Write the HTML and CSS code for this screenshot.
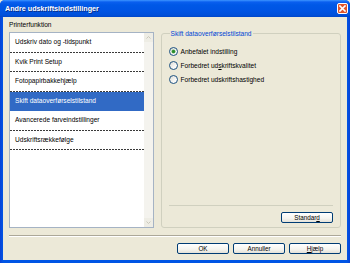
FILE: index.html
```html
<!DOCTYPE html>
<html>
<head>
<meta charset="utf-8">
<link rel="stylesheet" href="styles.css">
</head>
<body>
<div class="window">
  <div class="titlebar">
    <span class="title">Andre udskriftsindstillinger</span>
    <span class="close"><svg width="7" height="7" viewBox="0 0 7 7"><path d="M1 1 L6 6 M6 1 L1 6" stroke="#fff" stroke-width="1.6" stroke-linecap="square"/></svg></span>
  </div>
  <div class="client">
    <div class="main">
      <div class="left">
        <div class="caption">Printerfunktion</div>
        <div class="listbox">
          <ul class="items">
            <li>Udskriv dato og -tidspunkt</li>
            <li>Kvik Print Setup</li>
            <li>Fotopapirbakkehjælp</li>
            <li class="sel">Skift dataoverførselstilstand</li>
            <li>Avancerede farveindstillinger</li>
            <li>Udskriftsrækkefølge</li>
          </ul>
          <div class="scrollbar">
            <span class="sbtn"><svg width="5" height="3" viewBox="0 0 5 3"><path d="M0.5 2.5 L2.5 0.5 L4.5 2.5" fill="none" stroke="#C9C7BA" stroke-width="1"/></svg></span>
            <span class="sbtn"><svg width="5" height="3" viewBox="0 0 5 3"><path d="M0.5 0.5 L2.5 2.5 L4.5 0.5" fill="none" stroke="#C9C7BA" stroke-width="1"/></svg></span>
          </div>
        </div>
      </div>
      <fieldset class="group">
        <legend>Skift dataoverførselstilstand</legend>
        <div class="radios">
          <div class="radio"><span class="dot on"></span><span>Anbefalet indstilling</span></div>
          <div class="radio"><span class="dot"></span><span>Forbedret ud<u>s</u>kriftskvalitet</span></div>
          <div class="radio"><span class="dot"></span><span>Forbedret udskriftshastighed</span></div>
        </div>
        <div class="grow"></div>
        <div class="sep-in"></div>
        <div class="row-end">
          <span class="btn"><span>Standar<u>d</u></span></span>
        </div>
      </fieldset>
    </div>
    <div class="sep"></div>
    <div class="row-end buttons">
      <span class="btn"><span>OK</span></span>
      <span class="btn"><span>Annuller</span></span>
      <span class="btn"><span><u>H</u>jælp</span></span>
    </div>
  </div>
</div>
</body>
</html>
```

FILE: styles.css
```css
html, body {
  margin: 0;
  padding: 0;
  width: 350px;
  height: 263px;
  overflow: hidden;
  background: #ECE9D8;
}
body {
  font-family: "Liberation Sans", Arial, sans-serif;
  font-size: 6.6px;
  color: #000;
}
.window {
  width: 350px;
  height: 263px;
  display: flex;
  flex-direction: column;
  background: linear-gradient(to right, #0842D6 0, #0055E5 3px, #0055E5 347px, #0842D6 350px);
  border-radius: 5px 5px 0 0;
  box-sizing: border-box;
}
.titlebar {
  height: 17px;
  flex: none;
  display: flex;
  align-items: center;
  justify-content: space-between;
  padding: 0 2px 0 5px;
  background: linear-gradient(to bottom, #3D95FF 0, #0A5FEF 2px, #0058E6 5px, #0054E3 11px, #0050DA 15px, #0046C8 17px);
  border-radius: 5px 5px 0 0;
}
.title {
  color: #fff;
  font-weight: bold;
  font-size: 7.2px;
  text-shadow: 1px 1px 0 #0A2E86;
}
.close {
  width: 11px;
  height: 11px;
  box-sizing: border-box;
  border: 1px solid #fff;
  border-radius: 2px;
  background: #E0542B;
  display: flex;
  align-items: center;
  justify-content: center;
}
.client {
  flex: 1;
  margin: 0 3px 3px 3px;
  background: #ECE9D8;
  padding: 3px 6px 0 6px;
  display: flex;
  flex-direction: column;
}
.main {
  display: flex;
  gap: 7px;
}
.left {
  width: 145px;
  display: flex;
  flex-direction: column;
}
.caption {
  height: 9px;
  line-height: 9px;
  margin-bottom: 3px;
}
.listbox {
  height: 196px;
  box-sizing: border-box;
  border: 1px solid #A5B3C4;
  background: #fff;
  display: flex;
}
.items {
  list-style: none;
  margin: 0;
  padding: 0;
  flex: 1;
}
.items li {
  height: 19.5px;
  line-height: 18.5px;
  box-sizing: border-box;
  padding-left: 5px;
  white-space: nowrap;
  background: repeating-linear-gradient(to right, #3A3A3A 0, #3A3A3A 2px, transparent 2px, transparent 3px) left bottom / 100% 1px no-repeat;
}
.items li.sel {
  background: #316AC5;
  color: #fff;
}
.scrollbar {
  width: 9px;
  background: #F4F3EE;
  display: flex;
  flex-direction: column;
  justify-content: space-between;
}
.sbtn {
  height: 9px;
  background: #EEEDE5;
  display: flex;
  align-items: center;
  justify-content: center;
}
.group {
  margin: 9px 0 0 0;
  width: 181px;
  height: 199px;
  box-sizing: border-box;
  border: 1px solid #D0D0BF;
  border-radius: 3px;
  padding: 0 7px 4px 7px;
  display: flex;
  flex-direction: column;
  min-width: 0;
}
.group legend {
  color: #0046D5;
  padding: 0 1px;
  margin-left: 1px;
  line-height: 9px;
}
.radios {
  display: flex;
  flex-direction: column;
  padding-top: 6px;
}
.radio {
  height: 14px;
  display: flex;
  align-items: center;
  gap: 3px;
  white-space: nowrap;
}
.dot {
  width: 9px;
  height: 9px;
  box-sizing: border-box;
  border: 1px solid #1C5180;
  border-radius: 50%;
  background: linear-gradient(135deg, #DCDBD4 0, #F6F6F4 60%, #fff 100%);
  display: flex;
  align-items: center;
  justify-content: center;
}
.dot.on::after {
  content: "";
  width: 3px;
  height: 3px;
  border-radius: 50%;
  background: #2A8B2A;
  box-shadow: 0 0 0 0.5px #55B055;
}
.grow {
  flex: 1;
}
.sep-in {
  height: 1px;
  background: #D0D0BF;
  margin-bottom: 6px;
}
.row-end {
  display: flex;
  justify-content: flex-end;
  gap: 4px;
}
.btn {
  width: 52px;
  height: 11px;
  box-sizing: border-box;
  border: 1px solid #003C74;
  border-radius: 2px;
  background: linear-gradient(to bottom, #FFFFFF 0, #F5F4EF 60%, #E3E1D8 100%);
  display: flex;
  align-items: center;
  justify-content: center;
  font-size: 6.3px;
  line-height: 9px;
}
.sep {
  margin-top: 7px;
  height: 1px;
  border-bottom: 1px solid #fff;
  background: #ACA899;
}
.buttons {
  margin-top: 6px;
}
```
